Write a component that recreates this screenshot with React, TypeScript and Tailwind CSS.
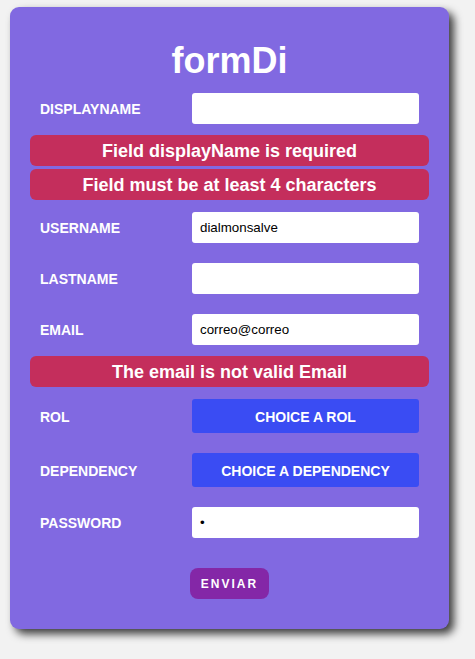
const font = { fontFamily: '"Liberation Sans", Arial, sans-serif' }

type FieldProps = {
    label: string,
    value?: string,
    type?: string,
}

const Field = ({ label, value = '', type = 'text' }: FieldProps) => {
    return (
        <div className="flex items-center h-[31px]">
            <label className="w-[162px] pl-[10px] pt-[2px] text-[14px] font-bold text-white">{label}</label>
            <input
                type={type}
                value={value}
                readOnly
                className="w-[227px] h-[31px] bg-white rounded-[3px] px-[8px] text-[13.33px] text-black outline-none"
                style={{ fontFamily: '"Liberation Sans", Arial, sans-serif' }}
            />
        </div>
    )
}

const ErrorMsg = ({ text }: { text: string }) => {
    return (
        <div className="h-[31px] w-full rounded-[6px] bg-[#c42e5c] flex items-center justify-center pt-[2px] text-[18px] font-bold text-white">
            {text}
        </div>
    )
}

const ChoiceRow = ({ label, text }: { label: string, text: string }) => {
    return (
        <div className="flex items-center h-[34px]">
            <p className="w-[162px] pl-[10px] pt-[2px] text-[14px] font-bold text-white">{label}</p>
            <button className="w-[227px] h-[34px] rounded-[3px] bg-[#3a4cf3] pt-[2px] text-white text-[14px] font-bold">{text}</button>
        </div>
    )
}

const App = () => {
    return (
        <div className="min-h-screen bg-[#f2f2f2] pt-[7px] pl-[10px]" style={font}>
            <div className="w-[439px] h-[622px] rounded-[9px] bg-[#8169e1] shadow-[5px_5px_8px_rgba(0,0,0,0.75)] px-[20px] pt-[34px] flex flex-col">
                <h1 className="text-[36px] leading-[40px] font-bold text-white text-center">formDi</h1>

                <div className="mt-[12px]">
                    <Field label="DISPLAYNAME" />
                </div>
                <div className="mt-[11px] flex flex-col gap-[3px]">
                    <ErrorMsg text="Field displayName is required" />
                    <ErrorMsg text="Field must be at least 4 characters" />
                </div>

                <div className="mt-[12px] flex flex-col gap-[20px]">
                    <Field label="USERNAME" value="dialmonsalve" />
                    <Field label="LASTNAME" />
                    <Field label="EMAIL" value="correo@correo" />
                </div>
                <div className="mt-[11px]">
                    <ErrorMsg text="The email is not valid Email" />
                </div>

                <div className="mt-[12px] flex flex-col gap-[20px]">
                    <ChoiceRow label="ROL" text="CHOICE A ROL" />
                    <ChoiceRow label="DEPENDENCY" text="CHOICE A DEPENDENCY" />
                </div>
                <div className="mt-[20px]">
                    <Field label="PASSWORD" type="password" value="a" />
                </div>

                <div className="mt-[30px] flex">
                    <button className="ml-[160px] w-[79px] h-[31px] rounded-[8px] bg-[#8427a7] text-white text-[12px] font-bold tracking-[2px]">ENVIAR</button>
                </div>
            </div>
        </div>
    )
}

export default App
